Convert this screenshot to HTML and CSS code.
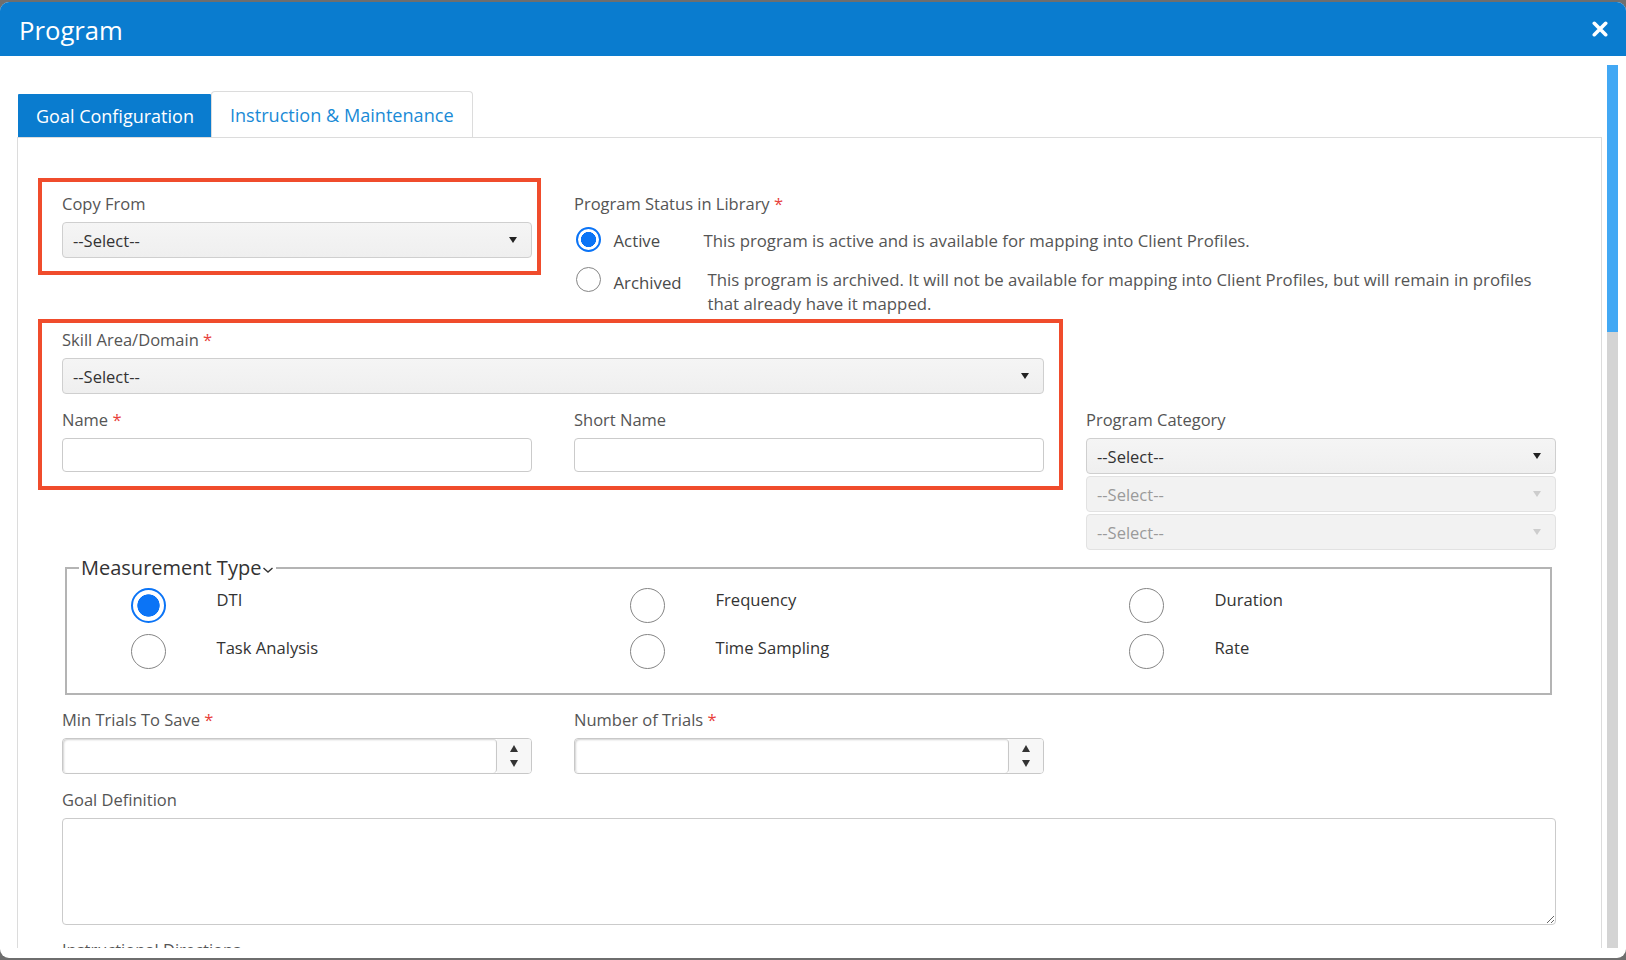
FILE: index.html
```html
<!DOCTYPE html>
<html lang="en">
<head>
<meta charset="utf-8">
<title>Program</title>
<link rel="stylesheet" href="styles.css">
</head>
<body>
<div class="modal">
  <div class="modal-header">
    <h1 class="modal-title">Program</h1>
    <button class="close-btn" type="button" aria-label="Close">
      <svg width="16" height="16" viewBox="0 0 16 16"><path d="M2.3 2.3 L13.7 13.7 M13.7 2.3 L2.3 13.7" stroke="#fff" stroke-width="3.6" stroke-linecap="round" fill="none"/></svg>
    </button>
  </div>
  <div class="modal-body">
    <div class="scroll-area">
      <div class="tabs">
        <div class="tab tab-active">Goal Configuration</div>
        <div class="tab">Instruction &amp; Maintenance</div>
      </div>
      <div class="tab-panel">
        <div class="row">
          <div class="field">
            <label class="label">Copy From</label>
            <div class="select"><span>--Select--</span><span class="caret"></span></div>
          </div>
          <div class="field span-2">
            <label class="label">Program Status in Library <span class="req">*</span></label>
            <div class="status-row status-active">
              <input class="radio radio-sm" type="radio" name="status" checked>
              <span class="status-name">Active</span>
              <span class="status-desc">This program is active and is available for mapping into Client Profiles.</span>
            </div>
            <div class="status-row status-archived">
              <input class="radio radio-sm" type="radio" name="status">
              <span class="status-name status-name-arch">Archived</span>
              <span class="status-desc">This program is archived. It will not be available for mapping into Client Profiles, but will remain in profiles<br>that already have it mapped.</span>
            </div>
          </div>
        </div>

        <div class="row row-b">
          <div class="field span-2">
            <label class="label">Skill Area/Domain <span class="req">*</span></label>
            <div class="select"><span>--Select--</span><span class="caret"></span></div>
          </div>
        </div>

        <div class="row row-c">
          <div class="field">
            <label class="label">Name <span class="req">*</span></label>
            <input class="text-input" type="text">
          </div>
          <div class="field">
            <label class="label">Short Name</label>
            <input class="text-input" type="text">
          </div>
          <div class="field">
            <label class="label">Program Category</label>
            <div class="select-stack">
              <div class="select"><span>--Select--</span><span class="caret"></span></div>
              <div class="select select-disabled"><span>--Select--</span><span class="caret"></span></div>
              <div class="select select-disabled"><span>--Select--</span><span class="caret"></span></div>
            </div>
          </div>
        </div>

        <fieldset class="measure">
          <legend>Measurement Type<svg class="chev" width="12" height="8" viewBox="0 0 12 8"><path d="M1.5 2 L6 6 L10.5 2" stroke="#333" stroke-width="1.4" fill="none"/></svg></legend>
          <div class="options">
            <div class="option"><input class="radio" type="radio" name="mt" checked><span class="option-text">DTI</span></div>
            <div class="option"><input class="radio" type="radio" name="mt"><span class="option-text">Frequency</span></div>
            <div class="option"><input class="radio" type="radio" name="mt"><span class="option-text">Duration</span></div>
            <div class="option"><input class="radio" type="radio" name="mt"><span class="option-text">Task Analysis</span></div>
            <div class="option"><input class="radio" type="radio" name="mt"><span class="option-text">Time Sampling</span></div>
            <div class="option"><input class="radio" type="radio" name="mt"><span class="option-text">Rate</span></div>
          </div>
        </fieldset>

        <div class="row row-d">
          <div class="field">
            <label class="label">Min Trials To Save <span class="req">*</span></label>
            <div class="num"><input class="num-field" type="text"><div class="spin"><span class="tri-up"></span><span class="tri-down"></span></div></div>
          </div>
          <div class="field">
            <label class="label">Number of Trials <span class="req">*</span></label>
            <div class="num"><input class="num-field" type="text"><div class="spin"><span class="tri-up"></span><span class="tri-down"></span></div></div>
          </div>
        </div>

        <div class="row row-e">
          <div class="field span-3">
            <label class="label">Goal Definition</label>
            <textarea class="textarea"></textarea>
          </div>
        </div>

        <div class="row row-f">
          <div class="field span-3">
            <label class="label">Instructional Directions</label>
          </div>
        </div>

        <div class="annot annot-1"></div>
        <div class="annot annot-2"></div>
      </div>
    </div>
    <div class="scrollbar"><div class="thumb"></div></div>
  </div>
</div>
</body>
</html>
```
FILE: styles.css
```css
* { box-sizing: border-box; }
html, body { margin: 0; height: 100%; }
body {
  background: #6e6e6e;
  font-family: "Open Sans", "Noto Sans", sans-serif;
  overflow: hidden;
}
.modal {
  margin-top: 2px;
  height: 956px;
  background: #fff;
  border-radius: 9px;
  overflow: hidden;
  display: flex;
  flex-direction: column;
}
.modal-header {
  height: 54px;
  flex: none;
  background: #0a7ccf;
  display: flex;
  align-items: center;
  justify-content: space-between;
  padding: 0 18px 0 19px;
}
.modal-title {
  margin: 3px 0 0 0;
  font-size: 25.7px;
  font-weight: 400;
  color: #fff;
  line-height: 30px;
}
.close-btn {
  background: none;
  border: 0;
  padding: 0;
  width: 16px;
  height: 16px;
  display: flex;
}
.modal-body {
  height: 892px;
  flex: none;
  display: flex;
}
.scroll-area {
  flex: 1;
  min-width: 0;
  overflow: hidden;
  padding: 35px 5px 0 17px;
}
.scrollbar {
  width: 11px;
  flex: none;
  margin: 9px 8px 0 0;
  background: #d4d4d4;
}
.thumb {
  height: 267px;
  background: #42a8f4;
}

/* tabs */
.tabs {
  display: flex;
  align-items: flex-end;
  height: 46px;
  padding-left: 1px;
}
.tab {
  height: 46px;
  padding: 0 18px 0 18px;
  display: flex;
  align-items: center;
  font-size: 18.1px;
  color: #1a8ad6;
  background: #fff;
  border: 1px solid #dcdcdc;
  border-bottom: 0;
  border-radius: 4px 4px 0 0;
}
.tab-active {
  height: 43px;
  padding: 0 17px 0 18px;
  font-size: 18px;
  background: #0a7ccf;
  color: #fff;
  border: 0;
  border-radius: 1px 1px 0 0;
}

.tab-panel {
  position: relative;
  border: 1px solid #dcdcdc;
  border-bottom: 0;
  padding: 55px 45px 0 44px;
  height: 820px;
}

/* form layout */
.row {
  display: grid;
  grid-template-columns: repeat(3, 470px);
  column-gap: 42px;
}
.row-b { margin-top: 13px; }
.row-c { margin-top: 15px; }
.row-d { margin-top: 14px; }
.row-e { margin-top: 15px; }
.row-f { margin-top: 14px; }
.span-2 { grid-column: span 2; }
.span-3 { grid-column: span 3; }

.label {
  display: block;
  font-size: 16.5px;
  line-height: 22px;
  color: #555;
  margin-bottom: 7px;
}
.req { color: #e8403a; }

.select {
  height: 36px;
  border: 1px solid #cfcfcf;
  border-radius: 4px;
  background: linear-gradient(#f5f5f5, #efefef);
  display: flex;
  align-items: center;
  justify-content: space-between;
  padding: 0 14px 0 10px;
  font-size: 16.5px;
  color: #333;
}
.caret {
  width: 0;
  height: 0;
  border-left: 4px solid transparent;
  border-right: 4px solid transparent;
  border-top: 6px solid #222;
}
.select-disabled {
  color: #9a9a9a;
  border-color: #e2e2e2;
  background: #f2f2f2;
}
.select-disabled .caret { border-top-color: #cdcdcd; }
.select-stack {
  display: flex;
  flex-direction: column;
  gap: 2px;
}

.text-input {
  display: block;
  width: 100%;
  height: 34px;
  border: 1px solid #cbcbcb;
  border-radius: 4px;
  background: #fff;
  margin: 0;
}

/* status */
.status-row {
  display: flex;
  align-items: flex-start;
  font-size: 16.8px;
  line-height: 24px;
  color: #555;
}
.status-active { margin-top: 12px; }
.status-archived { margin-top: 14px; }
.status-name {
  width: 90px;
  flex: none;
  margin-top: 1.5px;
  color: #4a4a4a;
}
.status-name-arch {
  width: 94px;
  margin-top: 4.5px;
}
.status-desc {
  flex: 1;
  margin-top: 1.5px;
  color: #555;
}

/* radios */
.radio {
  -webkit-appearance: none;
  appearance: none;
  margin: 0;
  flex: none;
  width: 35px;
  height: 35px;
  border-radius: 50%;
  border: 1.5px solid #858585;
  background: #fff;
}
.radio:checked {
  border: 2px solid #0b74f6;
  background: radial-gradient(circle closest-side, #0b74f6 0 70%, #fff 74%);
}
.radio-sm {
  width: 25px;
  height: 25px;
  margin: 0 13px 0 1.5px;
}

/* fieldset */
.measure {
  margin: 5px 4px 0 3px;
  border: 2px solid #b4b4b4;
  padding: 0 12px 24px 12px;
  min-width: 0;
}
.measure legend {
  padding: 0 2px;
  font-size: 20px;
  line-height: 26px;
  color: #333;
}
.chev { vertical-align: middle; margin-left: 1px; }
.options {
  display: grid;
  grid-template-columns: 499px 499px 1fr;
  row-gap: 11.5px;
  margin: 6.5px 0 0 51.5px;
}
.option {
  display: flex;
  align-items: flex-start;
}
.option .radio { margin-right: 51px; }
.option-text {
  font-size: 16.6px;
  line-height: 24px;
  color: #333;
}
.option:nth-child(n+4) .option-text { margin-top: 2px; }

/* number inputs */
.num {
  display: flex;
  height: 36px;
  border: 1px solid #c8c8c8;
  border-radius: 4px;
  overflow: hidden;
}
.num-field {
  flex: 1;
  min-width: 0;
  margin: 0;
  border: 0;
  border-right: 1px solid #c8c8c8;
  border-radius: 4px;
  box-shadow: inset 1px 1px 2px rgba(0, 0, 0, 0.18);
  background: #fff;
}
.spin {
  width: 34px;
  flex: none;
  display: flex;
  flex-direction: column;
  align-items: center;
  justify-content: center;
  gap: 8px;
  background: #f7f7f7;
}
.tri-up, .tri-down {
  width: 0;
  height: 0;
  border-left: 4.5px solid transparent;
  border-right: 4.5px solid transparent;
}
.tri-up { border-bottom: 7px solid #333; }
.tri-down { border-top: 7px solid #333; }

.textarea {
  display: block;
  width: 100%;
  height: 107px;
  margin: 0;
  border: 1px solid #cbcbcb;
  border-radius: 4px;
  background: #fff;
}

/* annotation boxes drawn over the form */
.annot {
  position: absolute;
  border: 4px solid #f04c2c;
  pointer-events: none;
}
.annot-1 { left: 20px; top: 40px; width: 503px; height: 97px; }
.annot-2 { left: 20px; top: 181px; width: 1025px; height: 171px; }
```
